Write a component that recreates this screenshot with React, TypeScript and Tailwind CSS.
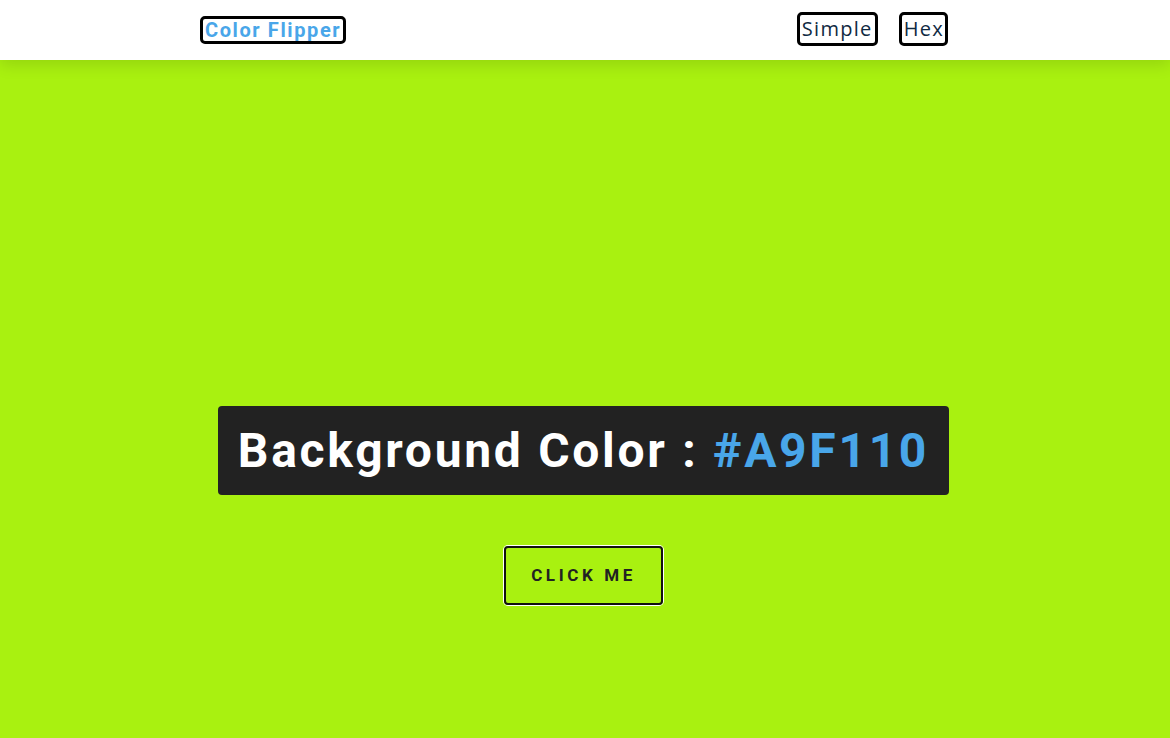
import React from "react";

export default function App() {
  return (
    <div className="min-h-screen flex flex-col bg-[#A9F110]" style={{ fontFamily: "Roboto, 'Open Sans', sans-serif" }}>
      <nav className="h-[60px] bg-white shadow-[0_5px_15px_rgba(0,0,0,0.12)] relative z-10 flex justify-center">
        <div className="w-[770px] flex items-start justify-between">
          <a className="mt-[16px] h-[28px] px-[2px] flex items-center border-[3px] border-black rounded-[5px] text-[#49a6e9] font-bold text-[20px] tracking-[1.6px] font-['Roboto'] leading-none">
            Color Flipper
          </a>
          <ul className="flex gap-[21px] mr-[22px] mt-[12px]">
            <li>
              <a className="h-[34px] px-[2px] flex items-center border-[3px] border-black rounded-[5px] text-[#102a42] text-[20px] tracking-[1.3px] font-['Open_Sans'] leading-none">
                Simple
              </a>
            </li>
            <li>
              <a className="h-[34px] pl-[2px] pr-[1px] flex items-center border-[3px] border-black rounded-[5px] text-[#102a42] text-[20px] tracking-[1.3px] font-['Open_Sans'] leading-none">
                Hex
              </a>
            </li>
          </ul>
        </div>
      </nav>
      <main className="flex-1 flex flex-col items-center pt-[346px]">
        <h2 className="mr-[3px] bg-[#222222] rounded-[4px] h-[89px] px-[20px] flex items-center text-white font-bold text-[48px] tracking-[2.7px] font-['Roboto'] leading-none">
          Background Color :&nbsp;<span className="text-[#49a6e9]">#A9F110</span>
        </h2>
        <button className="mr-[3px] mt-[51px] w-[159px] h-[59px] rounded-[4px] border-2 border-[#111] ring-1 ring-white bg-transparent text-[#222] font-bold text-[17px] tracking-[3.6px] uppercase font-['Roboto']">
          click me
        </button>
      </main>
    </div>
  );
}
